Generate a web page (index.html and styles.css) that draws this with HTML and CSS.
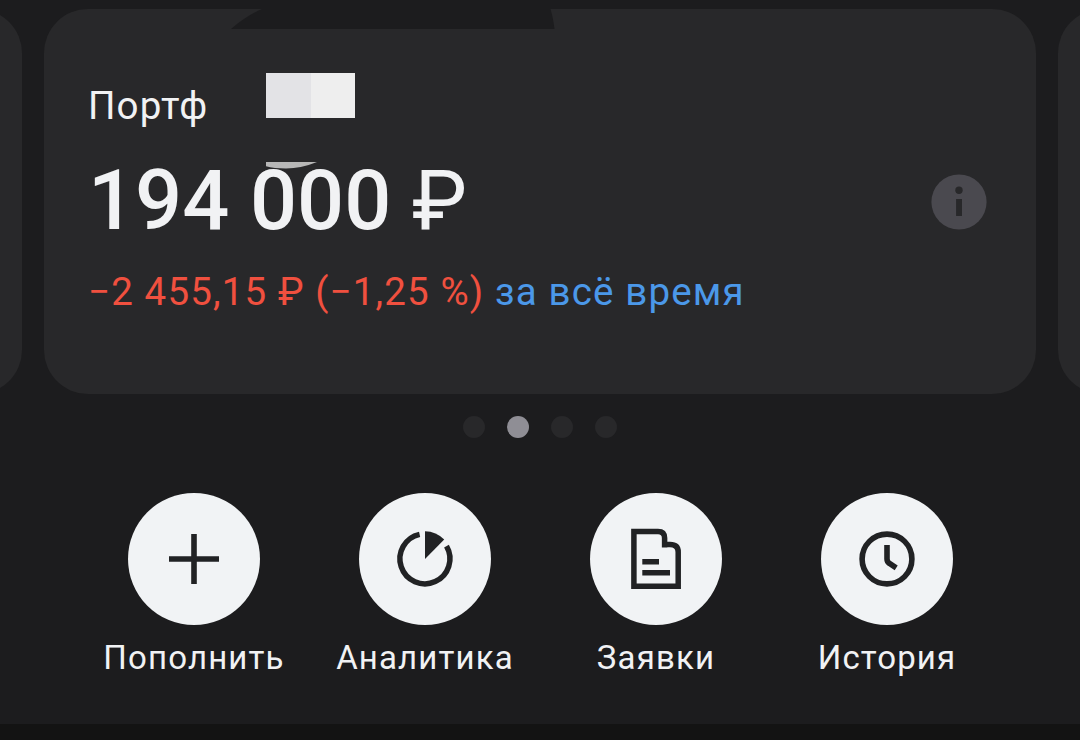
FILE: index.html
```
<!DOCTYPE html>
<html lang="ru">
<head>
<meta charset="utf-8">
<title>Портфель</title>
<link rel="stylesheet" href="styles.css">
</head>
<body>
<main class="screen">
  <section class="carousel">
    <div class="card"></div>
    <article class="card card-main">
      <svg class="notch" width="324" height="20" viewBox="0 0 324 20"><path d="M0 20Q15 7 31 0H319.5Q322 8 323.5 20Z" fill="#1c1c1e"/></svg>
      <div class="mask"><span class="mask-left"></span><span class="mask-right"></span></div>
      <svg class="sliver" width="52" height="7" viewBox="0 0 52 7"><path d="M0 0H51Q35 6.5 20 6.5Q8 6.5 0 4.3Z" fill="#b7b7b7"/></svg>
      <div class="summary">
        <h1 class="title">Портф</h1>
        <div class="amount">194 000 <span class="currency">₽</span></div>
        <div class="change"><span class="loss">−2 455,15 ₽ (−1,25 %)</span> <a class="period">за всё время</a></div>
      </div>
      <svg class="info" width="56" height="56" viewBox="0 0 56 56"><circle cx="28" cy="28" r="27.6" fill="#4a494f"/><circle cx="28" cy="16.2" r="3.7" fill="#28282a"/><path d="M25.1 25H31V42H25.1Z" fill="#28282a"/></svg>
    </article>
    <div class="card"></div>
  </section>
  <div class="dots"><i class="dot"></i><i class="dot dot-active"></i><i class="dot"></i><i class="dot"></i></div>
  <nav class="actions">
    <div class="action">
      <span class="bubble"><svg width="66" height="66" viewBox="0 0 66 66"><path d="M33 8V58M8 33H58" fill="none" stroke="#212224" stroke-width="5.6"/></svg></span>
      <span class="label">Пополнить</span>
    </div>
    <div class="action">
      <span class="bubble"><svg width="66" height="66" viewBox="0 0 66 66"><path d="M27.6 8.4A25 25 0 1 0 54.5 20.2" fill="none" stroke="#212224" stroke-width="5.5"/><path d="M33 33V5.2A27.8 27.8 0 0 1 52.2 13.5Z" fill="#212224"/></svg></span>
      <span class="label">Аналитика</span>
    </div>
    <div class="action">
      <span class="bubble"><svg width="66" height="66" viewBox="0 0 66 66"><path d="M39 18.6H47Q55.2 18.6 55.2 26V60.3H10.9V5.5H35Q41.6 5.5 41.6 12V21.4" fill="none" stroke="#212224" stroke-width="5.5"/><path d="M19.3 35.7H36M19.3 46.8H47" stroke="#212224" stroke-width="5.4"/></svg></span>
      <span class="label">Заявки</span>
    </div>
    <div class="action">
      <span class="bubble"><svg width="66" height="66" viewBox="0 0 66 66"><circle cx="33" cy="33" r="24.9" fill="none" stroke="#212224" stroke-width="5.6"/><path d="M33 19V33Q33 36 35.5 37.5L42.2 41.8" fill="none" stroke="#212224" stroke-width="5.6"/></svg></span>
      <span class="label">История</span>
    </div>
  </nav>
  <footer class="bottom"></footer>
</main>
</body>
</html>
```

FILE: styles.css
```
* { box-sizing: border-box; }
body {
  margin: 0;
  background: #1c1c1e;
  font-family: Roboto, "Noto Sans", sans-serif;
  color: #f1f2f4;
}
.screen {
  width: 1080px;
  height: 740px;
  overflow: hidden;
  display: flex;
  flex-direction: column;
}
.carousel {
  display: flex;
  justify-content: center;
  gap: 22px;
  padding-top: 9px;
  flex: none;
}
.card {
  flex: 0 0 992px;
  height: 385px;
  border-radius: 44px;
  background: #28282a;
}
.card-main {
  position: relative;
  display: flex;
  justify-content: space-between;
  padding: 74px 49px 0 44px;
}
.notch { position: absolute; left: 187px; top: 0; }
.mask {
  position: absolute;
  left: 222px;
  top: 64px;
  display: flex;
  width: 89px;
  height: 45px;
}
.mask-left { flex: 1; background: #e3e3e6; }
.mask-right { flex: 1; background: #eee; }
.sliver { position: absolute; left: 222px; top: 153px; }
.summary { position: relative; white-space: nowrap; }
.title {
  margin: 0;
  font-size: 38.5px;
  font-weight: 400;
  line-height: 46px;
  letter-spacing: 1.15px;
}
.amount {
  margin-top: 24px;
  font-size: 82.9px;
  font-weight: 500;
  line-height: 96px;
}
.currency { font-weight: 400; }
.change {
  margin-top: 20px;
  font-size: 38.5px;
  line-height: 46px;
  letter-spacing: 1.14px;
}
.loss { color: #f0503f; }
.period { color: #4b98e9; }
.info { margin-top: 91px; }
.dots {
  display: flex;
  justify-content: center;
  gap: 22px;
  margin-top: 22px;
}
.dot {
  width: 22px;
  height: 22px;
  border-radius: 50%;
  background: #28282a;
}
.dot-active { background: #8f8e95; }
.actions {
  display: flex;
  margin: 55px 0 0 78.5px;
}
.action {
  width: 231px;
  display: flex;
  flex-direction: column;
  align-items: center;
}
.bubble {
  width: 132px;
  height: 132px;
  border-radius: 50%;
  background: #f1f3f5;
  display: flex;
  align-items: center;
  justify-content: center;
}
.label {
  margin-top: 13px;
  font-size: 33px;
  line-height: 40px;
  letter-spacing: 1.15px;
}
.bottom {
  margin-top: auto;
  flex: 0 0 16px;
  background: #131313;
}
```
